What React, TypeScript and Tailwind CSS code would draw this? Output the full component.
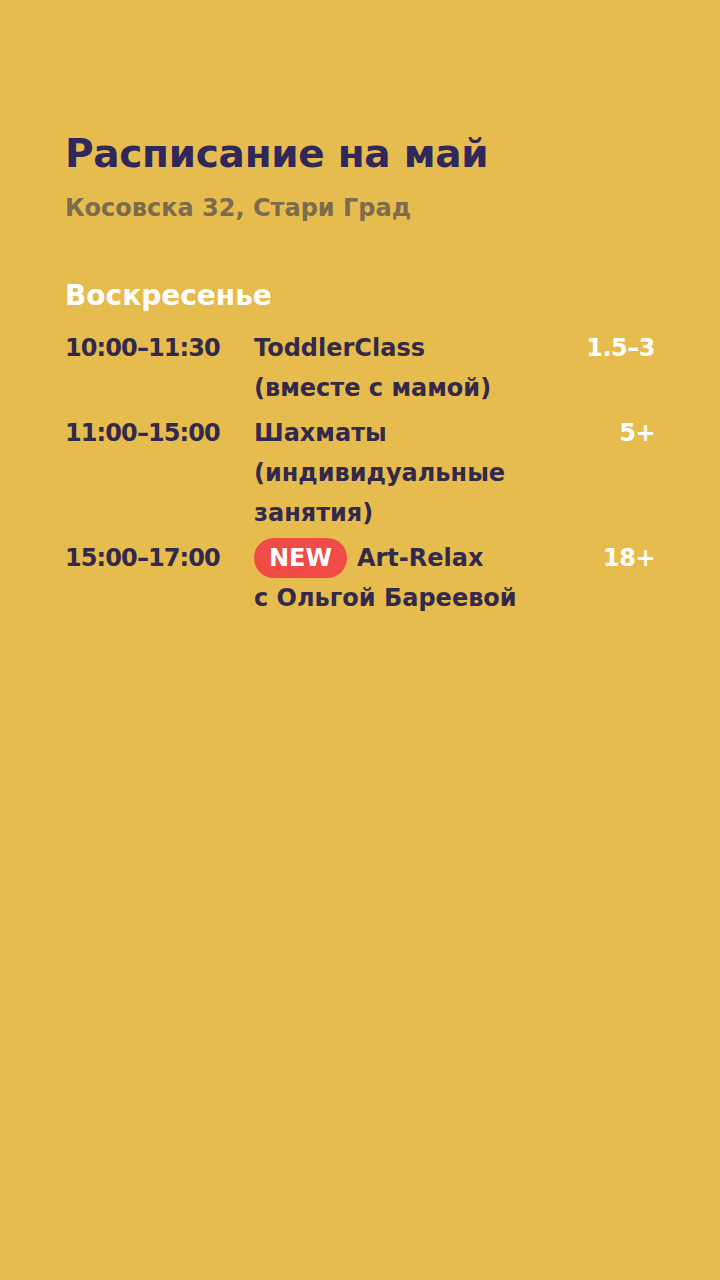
const rows = [
  { time: '10:00–11:30', lines: ['ToddlerClass', '(вместе с мамой)'], age: '1.5–3', isNew: false },
  { time: '11:00–15:00', lines: ['Шахматы', '(индивидуальные', 'занятия)'], age: '5+', isNew: false },
  { time: '15:00–17:00', lines: ['Art-Relax', 'с Ольгой Бареевой'], age: '18+', isNew: true },
];

export default function App() {
  return (
    <div
      className="w-[720px] h-[1280px] bg-[#e6bc4e] px-[65px] pt-[128px]"
      style={{ fontFamily: '"DejaVu Sans", sans-serif' }}
    >
      <h1 className="text-[39px] leading-[52px] font-bold text-[#30275a] tracking-[-0.3px]">Расписание на май</h1>
      <p className="mt-[12px] text-[24px] leading-[32px] font-semibold text-[#7c6b4c]">Косовска 32, Стари Град</p>

      <h2 className="mt-[54px] text-[28px] leading-[36px] font-bold text-white">Воскресенье</h2>

      <div className="mt-[14px] flex flex-col gap-[5px]">
        {rows.map((r) => (
          <div key={r.time} className="flex text-[24px] leading-[40px] font-semibold text-[#33294a]">
            <div className="w-[189px] shrink-0 tracking-[-0.9px]">{r.time}</div>
            <div className="flex-1">
              {r.lines.map((l, i) => (
                <div key={i} className="flex items-center">
                  {r.isNew && i === 0 && (
                    <span className="mr-[10px] bg-[#f04b47] text-white rounded-full px-[15px] h-[40px] flex items-center">NEW</span>
                  )}
                  {l}
                </div>
              ))}
            </div>
            <div className="text-white tracking-[-0.5px]">{r.age}</div>
          </div>
        ))}
      </div>
    </div>
  );
}
